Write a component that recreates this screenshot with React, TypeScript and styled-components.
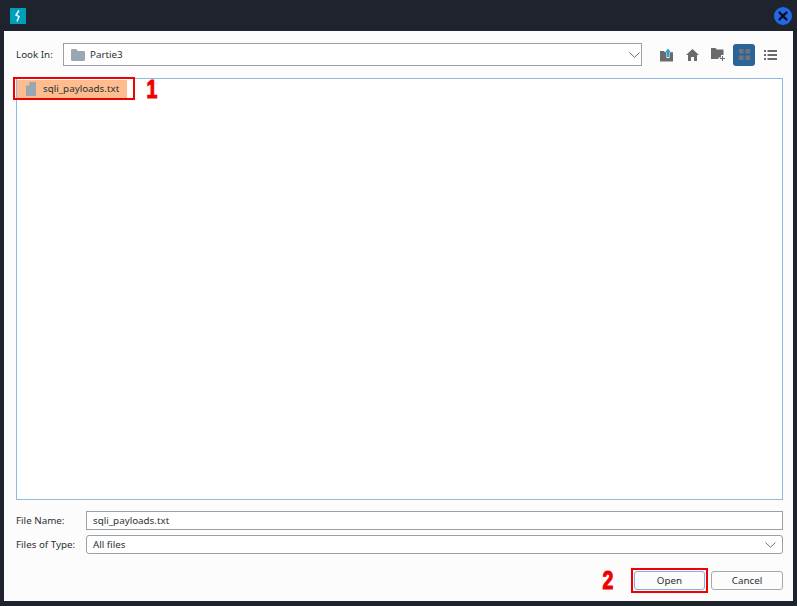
import React from 'react';
import styled, { createGlobalStyle } from 'styled-components';

const Global = createGlobalStyle`
  html, body { margin: 0; padding: 0; background: #1f232d; }
  body { font-family: "Noto Sans", "Open Sans", sans-serif; font-size: 9.8px; color: #2b3035; }
`;

const Frame = styled.div`
  position: relative;
  width: 797px;
  height: 606px;
  overflow: hidden;
  background: #1f232d;
  display: flex;
  flex-direction: column;
`;

const TitleBar = styled.div`
  height: 31px;
  flex: none;
  box-sizing: border-box;
  padding: 1px 5px 0 10px;
  display: flex;
  align-items: center;
  justify-content: space-between;
`;

const Body = styled.div`
  width: 789px;
  height: 570px;
  margin-left: 4px;
  flex: none;
  box-sizing: border-box;
  background: #fcfcfc;
  padding: 12px 10px 0 12px;
  display: flex;
  flex-direction: column;
`;

const LookRow = styled.div`
  display: flex;
  align-items: center;
  height: 23px;
`;

const Label = styled.span<{ $w: number }>`
  width: ${p => p.$w}px;
  flex: none;
  white-space: nowrap;
`;

const Combo = styled.div<{ $rounded?: boolean }>`
  flex: 1;
  height: 100%;
  box-sizing: border-box;
  background: #fff;
  border: 1px solid #9aa0a6;
  border-radius: ${p => (p.$rounded ? 3 : 0)}px;
  padding: 0 ${p => (p.$rounded ? 6 : 1)}px 0 ${p => (p.$rounded ? 6 : 7)}px;
  display: flex;
  align-items: center;
`;

const ComboText = styled.span<{ $indent?: number }>`
  flex: 1;
  margin-left: ${p => p.$indent ?? 0}px;
`;

const Tools = styled.div`
  display: flex;
  align-items: center;
  margin-left: 13px;
  width: 128px;
  flex: none;
  gap: 4px;
`;

const ToolButton = styled.div<{ $active?: boolean }>`
  width: 22px;
  height: 22px;
  border-radius: 3px;
  display: flex;
  align-items: center;
  justify-content: center;
  background: ${p => (p.$active ? '#2a6499' : 'transparent')};
`;

const FileList = styled.div`
  margin-top: 12px;
  height: 422px;
  box-sizing: border-box;
  border: 1px solid #8fb8dd;
  background: #fff;
  padding: 1px 0;
`;

const FileItem = styled.div`
  width: 110px;
  height: 18px;
  background: #fdbd8e;
  display: flex;
  align-items: center;
  padding: 0 0 1px 9px;
  box-sizing: border-box;
  gap: 7px;
`;

const FieldRow = styled.div<{ $top: number }>`
  margin-top: ${p => p.$top}px;
  height: 19px;
  display: flex;
  align-items: center;
`;

const TextInput = styled.div`
  flex: 1;
  height: 100%;
  box-sizing: border-box;
  background: #fff;
  border: 1px solid #9aa0a6;
  padding-left: 6px;
  display: flex;
  align-items: center;
`;

const Actions = styled.div`
  margin-top: 17px;
  display: flex;
  justify-content: flex-end;
  gap: 6px;
`;

const Button = styled.div<{ $focus?: boolean }>`
  width: ${p => (p.$focus ? 71 : 72)}px;
  height: 19px;
  box-sizing: border-box;
  background: #fcfcfc;
  border: 1px solid ${p => (p.$focus ? '#7fb2dc' : '#a5a8ad')};
  border-radius: 3px;
  display: flex;
  align-items: center;
  justify-content: center;
`;

const RedBox = styled.div<{ $x: number; $y: number; $w: number; $h: number }>`
  position: absolute;
  left: ${p => p.$x}px;
  top: ${p => p.$y}px;
  width: ${p => p.$w}px;
  height: ${p => p.$h}px;
  box-sizing: border-box;
  border: 2px solid #f00000;
`;

const Mark = styled.span<{ $x: number; $y: number }>`
  position: absolute;
  left: ${p => p.$x}px;
  top: ${p => p.$y}px;
  font-family: "Liberation Sans", sans-serif;
  font-weight: 700;
  font-size: 25px;
  line-height: 24px;
  color: #f00000;
  transform: scaleX(0.78);
  -webkit-text-stroke: 1.1px #f00000;
`;

const AppIcon = () => (
  <svg width="16" height="16" viewBox="0 0 16 16">
    <rect width="16" height="16" fill="#009fb7" />
    <path d="M9 2.5 6 7l3 1.5L7 13.5" fill="none" stroke="#e8fbff" strokeWidth="1.5" />
  </svg>
);

const CloseIcon = () => (
  <svg width="18" height="18" viewBox="0 0 18 18">
    <circle cx="9" cy="9" r="9" fill="#2468e8" />
    <path d="M5.5 5.5l7 7M12.5 5.5l-7 7" stroke="#0c1016" strokeWidth="2.4" strokeLinecap="round" />
  </svg>
);

const FolderIcon = () => (
  <svg width="14" height="12" viewBox="0 0 14 12">
    <path d="M0 1.5C0 .7.5 0 1.2 0H5l2 2h5.8c.7 0 1.2.5 1.2 1.2v7.6c0 .7-.5 1.2-1.2 1.2H1.2C.5 12 0 11.5 0 10.8z" fill="#9aa6b0" />
  </svg>
);

const DocIcon = () => (
  <svg width="10" height="14" viewBox="0 0 10 14">
    <path d="M3.5 0H10v14H0V3.5h3.5z" fill="#9aa6b0" />
    <path d="M2.6 0v2.6H0z" fill="#c4ccd2" />
  </svg>
);

const Chevron = () => (
  <svg width="11" height="6" viewBox="0 0 11 6">
    <path d="M.5.5l5 4.8 5-4.8" fill="none" stroke="#6d7278" strokeWidth="1" />
  </svg>
);

const UpIcon = () => (
  <svg width="13" height="14" viewBox="0 0 13 14">
    <path d="M0 3h4l1 1.2h1.5V10h3V4.2H13V13.5H0z" fill="#6a6a6a" />
    <path d="M7 9V4.5H5L8 .5l3 4H9V9z" fill="#2a9fe0" />
  </svg>
);

const HomeIcon = () => (
  <svg width="13" height="12" viewBox="0 0 13 12">
    <path d="M6.5 0 13 6h-2v6H8V8H5v4H2V6H0z" fill="#6a6a6a" />
  </svg>
);

const NewFolderIcon = () => (
  <svg width="15" height="13" viewBox="0 0 15 13">
    <path d="M0 0h4.5L6 1.6h6.5V7H10v2.5H7.5V11H0z" fill="#6a6a6a" />
    <path d="M11 8v2H9v1h2v2h1v-2h2v-1h-2V8z" fill="#6a6a6a" />
  </svg>
);

const GridIcon = () => (
  <svg width="11" height="11" viewBox="0 0 11 11">
    <path d="M0 0h4.5v4.5H0zM6.5 0H11v4.5H6.5zM0 6.5h4.5V11H0zM6.5 6.5H11V11H6.5z" fill="#6f7478" />
  </svg>
);

const ListIcon = () => (
  <svg width="13" height="10" viewBox="0 0 13 10">
    <path d="M0 0h2v2H0zM3.5 0H13v2H3.5zM0 4h2v2H0zM3.5 4H13v2H3.5zM0 8h2v2H0zM3.5 8H13v2H3.5z" fill="#6a6a6a" />
  </svg>
);

export default function App() {
  return (
    <Frame>
      <Global />
      <TitleBar>
        <AppIcon />
        <CloseIcon />
      </TitleBar>
      <Body>
        <LookRow>
          <Label $w={47}>Look In:</Label>
          <Combo>
            <FolderIcon />
            <ComboText $indent={5}>Partie3</ComboText>
            <Chevron />
          </Combo>
          <Tools>
            <ToolButton><UpIcon /></ToolButton>
            <ToolButton><HomeIcon /></ToolButton>
            <ToolButton><NewFolderIcon /></ToolButton>
            <ToolButton $active><GridIcon /></ToolButton>
            <ToolButton><ListIcon /></ToolButton>
          </Tools>
        </LookRow>
        <FileList>
          <FileItem>
            <DocIcon />
            sqli_payloads.txt
          </FileItem>
        </FileList>
        <FieldRow $top={11}>
          <Label $w={70}>File Name:</Label>
          <TextInput>sqli_payloads.txt</TextInput>
        </FieldRow>
        <FieldRow $top={5}>
          <Label $w={70}>Files of Type:</Label>
          <Combo $rounded>
            <ComboText>All files</ComboText>
            <Chevron />
          </Combo>
        </FieldRow>
        <Actions>
          <Button $focus>Open</Button>
          <Button>Cancel</Button>
        </Actions>
      </Body>
      <RedBox $x={13} $y={77} $w={122} $h={23} />
      <RedBox $x={631} $y={568} $w={77} $h={25} />
      <Mark $x={145} $y={77}>1</Mark>
      <Mark $x={601} $y={568}>2</Mark>
    </Frame>
  );
}
